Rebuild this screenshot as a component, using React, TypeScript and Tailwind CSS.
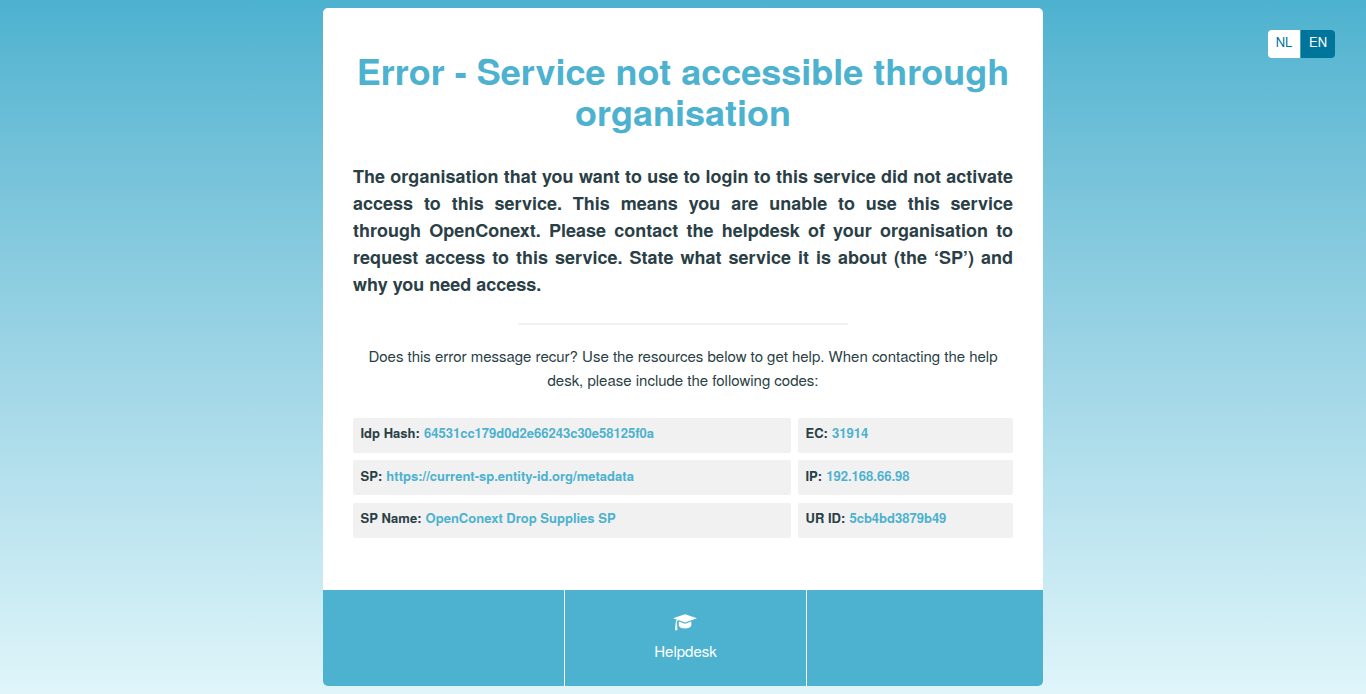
import React from 'react';

function Code({ label, value }: { label: string; value: string }) {
  return (
    <div className="h-[35px] rounded-[2px] bg-[#f1f1f1] px-[7.5px] pt-[0.2px] text-[13px] font-bold leading-[29px] tracking-[0.01px] text-[#4db2cf]">
      <span className="mr-[0.5px] text-[#2a3f46]">{label}:</span> {value}
    </div>
  );
}

function CapIcon() {
  return (
    <svg className="-ml-[0.5px] h-6 w-6" viewBox="0 0 24 24" fill="currentColor" aria-hidden="true">
      <path d="M12 4.3 24 8.3 12 12.4 5.2 10Q3.7 10.7 3.7 13.3L4.1 14.4 4.4 20.2H1.9L2.5 14.5 2.7 12.6Q2.9 10.6 3.8 9.5L0 8.3Z" />
      <path d="M5.8 11.5 12 13.7 18.3 11.5V15.6Q17.2 18.5 12 18.5 7.4 18.5 5.8 16Z" />
    </svg>
  );
}

export default function App() {
  return (
    <div className="relative h-[694px] overflow-hidden bg-linear-to-b from-[#4db2cf] to-[#dff5fa] pt-2 font-['Nimbus_Sans','TeX_Gyre_Heros','Liberation_Sans',Arial,sans-serif] text-[#2a3f46]">
      <main className="mx-auto flex h-[678px] w-[720px] flex-col overflow-hidden rounded-[5px] bg-white">
        <div className="h-[582px] px-[30px] pt-[42px]">
          <h1 className="text-center text-[36px] font-bold leading-[41px] text-[#4db2cf]">
            Error - Service not accessible through<br />organisation
          </h1>
          <p className="mt-[31px] text-justify text-[18px] font-bold leading-[27px]">
            The organisation that you want to use to login to this service did not activate access to this service. This means you are unable to use this service through OpenConext. Please contact the helpdesk of your organisation to request access to this service. State what service it is about (the ‘SP’) and why you need access.
          </p>
          <div className="mx-auto mt-[25px] h-[2px] w-[330px] bg-[#f1f1f1]" />
          <p className="mt-[19px] text-center text-[15px] leading-6 tracking-[-0.01px]">
            Does this error message recur? Use the resources below to get help. When contacting the help<br />desk, please include the following codes:
          </p>
          <div className="mt-[25.9px] grid grid-cols-[438px_215px] gap-x-[7px] gap-y-[7.5px]">
            <Code label="Idp Hash" value="64531cc179d0d2e66243c30e58125f0a" />
            <Code label="EC" value="31914" />
            <Code label="SP" value="https://current-sp.entity-id.org/metadata" />
            <Code label="IP" value="192.168.66.98" />
            <Code label="SP Name" value="OpenConext Drop Supplies SP" />
            <Code label="UR ID" value="5cb4bd3879b49" />
          </div>
        </div>
        <footer className="grid h-24 grid-cols-[242px_242px_236px] bg-[#4db2cf] text-white">
          <div className="border-r border-white" />
          <div className="flex flex-col items-center border-r border-white pt-5">
            <CapIcon />
            <span className="mt-[5px] text-[15px] leading-6">Helpdesk</span>
          </div>
          <div />
        </footer>
      </main>
      <nav className="absolute right-[31px] top-[30px] flex h-7 overflow-hidden rounded-[4px] text-[13px] leading-[24px]">
        <span className="w-8 bg-white text-center text-[#00759c]">NL</span>
        <span className="w-[35px] border-l border-[#4d9fba] bg-[#00759c] text-center text-white">EN</span>
      </nav>
    </div>
  );
}
